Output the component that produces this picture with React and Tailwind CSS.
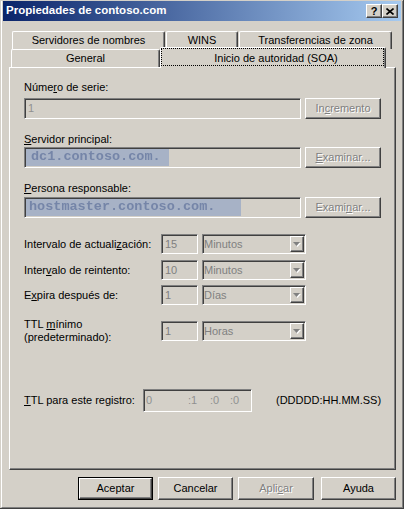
import React from 'react';

const raised =
  'border border-t-white border-l-white border-r-[#404040] border-b-[#404040] shadow-[inset_-1px_-1px_0_#808080]';
const sunken =
  'border border-t-[#808080] border-l-[#808080] border-r-white border-b-white shadow-[inset_1px_1px_0_#404040,inset_-1px_-1px_0_#d4d0c8]';
const grayed = 'text-[#808080] [text-shadow:1px_1px_0_#fff]';

function Button({ children, disabled, className = '' }) {
  return (
    <div className={`${raised} bg-[#d4d0c8] flex items-center justify-center ${disabled ? grayed : 'text-black'} ${className}`}>
      {children}
    </div>
  );
}

function Tab({ children, className = '' }) {
  return (
    <div
      className={`border-t border-l border-r border-t-white border-l-white border-r-[#404040] shadow-[inset_-1px_0_0_#808080] rounded-t-[2px] flex items-center justify-center ${className}`}
    >
      {children}
    </div>
  );
}

function Arrow() {
  return (
    <div className={`${raised} w-[14px] h-[16px] mr-px flex items-center justify-center`}>
      <svg width="8" height="5" viewBox="0 0 8 5">
        <path d="M1 1h7l-3.5 4z" fill="#fff" />
        <path d="M0 0h7l-3.5 4z" fill="#808080" />
      </svg>
    </div>
  );
}

function IntervalRow({ label, value, unit, className = '' }) {
  return (
    <div className={`flex items-center h-[20px] ${className}`}>
      <div className="w-[137px] leading-[13px]">{label}</div>
      <div className={`${sunken} w-[37px] h-full pl-[3px] flex items-center text-[#808080]`}>{value}</div>
      <div className={`${sunken} ml-[4px] w-[104px] h-full pl-px flex items-center text-[#808080]`}>
        <span>{unit}</span>
        <span className="ml-auto">
          <Arrow />
        </span>
      </div>
    </div>
  );
}

export default function App() {
  return (
    <div className="w-[404px] h-[509px] bg-[#d4d0c8] pt-px pl-px border-r border-b border-[#404040] font-['Liberation_Sans',Arial,sans-serif] text-[11px] text-black select-none">
      <div className="h-full border-l border-l-white border-r border-r-[#808080] border-b border-b-[#808080] flex flex-col">
        {/* Title bar */}
        <div className="ml-px w-[398px] h-[20px] bg-[linear-gradient(to_right,#0a246a,#a6caf0)] flex items-center pl-[3px] pr-[3px]">
          <span className="text-white font-bold text-[11.5px]">Propiedades de contoso.com</span>
          <div className="ml-auto flex">
            <Button className="w-[16px] h-[14px] font-bold text-[11px] leading-none">?</Button>
            <Button className="w-[16px] h-[14px]">
              <svg width="8" height="7" viewBox="0 0 8 7">
                <path d="M0.5 0.5l7 6M7.5 0.5l-7 6" stroke="#000" strokeWidth="1.6" />
              </svg>
            </Button>
          </div>
        </div>

        {/* Tabs */}
        <div className="flex gap-px ml-[10px] mt-[10px] h-[18px]">
          <Tab className="w-[153px] h-full">Servidores de nombres</Tab>
          <Tab className="w-[72px] h-full">WINS</Tab>
          <Tab className="w-[153px] h-full">Transferencias de zona</Tab>
        </div>
        <div className="flex items-end ml-[9px] h-[18px]">
          <Tab className="w-[149px] h-[18px] bg-[#d4d0c8]">General</Tab>
          <Tab className="relative z-10 w-[226px] h-[21px] mb-[-1px] bg-[#d4d0c8] items-start">
            <div className="absolute left-0 top-0 right-px bottom-[2px] border border-dotted border-black" />
            <span className="mt-[2px] ml-[6px]">Inicio de autoridad (SOA)</span>
          </Tab>
        </div>

        {/* Panel */}
        <div className="ml-[7px] w-[387px] h-[403px] border border-t-white border-l-white border-r-[#404040] border-b-[#404040] shadow-[inset_-1px_-1px_0_#808080] flex flex-col pl-[14px]">
          <div className="mt-[13px] leading-[13px]">
            Núme<u>r</u>o de serie:
          </div>
          <div className="mt-[4px] flex gap-[4px] h-[21px]">
            <div className={`${sunken} w-[277px] h-full pl-[3px] flex items-center text-[#909090]`}>1</div>
            <Button disabled className="w-[76px] h-full">
              <span>
                In<u>c</u>remento
              </span>
            </Button>
          </div>

          <div className="mt-[14px] leading-[13px]">
            <u>S</u>ervidor principal:
          </div>
          <div className="mt-px flex gap-[4px] h-[21px]">
            <div className={`${sunken} w-[277px] h-full flex py-px`}>
              <span className="ml-px w-[143px] pl-[5px] bg-[#a7b2c6] text-[#7585a8] font-['Liberation_Mono',monospace] text-[13.5px] font-bold blur-[0.4px] flex items-center">
                dc1.contoso.com.
              </span>
            </div>
            <Button disabled className="w-[76px] h-full">
              <span>
                <u>E</u>xaminar...
              </span>
            </Button>
          </div>

          <div className="mt-[14px] leading-[13px]">
            <u>P</u>ersona responsable:
          </div>
          <div className="mt-[2px] flex gap-[4px] h-[21px]">
            <div className={`${sunken} w-[277px] h-full flex py-px`}>
              <span className="ml-px w-[215px] pl-[3px] bg-[#a7b2c6] text-[#7585a8] font-['Liberation_Mono',monospace] text-[13.5px] font-bold blur-[0.4px] flex items-center">
                hostmaster.contoso.com.
              </span>
            </div>
            <Button disabled className="w-[76px] h-full">
              <span>
                Exami<u>n</u>ar...
              </span>
            </Button>
          </div>

          <IntervalRow
            className="mt-[16px]"
            label={<>Intervalo de actuali<u>z</u>ación:</>}
            value="15"
            unit="Minutos"
          />
          <IntervalRow
            className="mt-[6px]"
            label={<>Inter<u>v</u>alo de reintento:</>}
            value="10"
            unit="Minutos"
          />
          <IntervalRow
            className="mt-[5px]"
            label={<>E<u>x</u>pira después de:</>}
            value="1"
            unit="Días"
          />
          <IntervalRow
            className="mt-[16px]"
            label={
              <>
                TTL <u>m</u>ínimo
                <br />
                (predeterminado):
              </>
            }
            value="1"
            unit="Horas"
          />

          <div className="mt-[48px] flex items-center h-[23px]">
            <div className="w-[119px]">
              <u>T</u>TL para este registro:
            </div>
            <div className={`${sunken} w-[109px] h-full pl-[2px] flex items-center text-[#909090]`}>
              <span className="w-[42px]">0</span>
              <span className="w-[22px]">:1</span>
              <span className="w-[20px]">:0</span>
              <span>:0</span>
            </div>
            <div className="ml-[24px]">(DDDDD:HH.MM.SS)</div>
          </div>
        </div>

        {/* Bottom buttons */}
        <div className="mt-[7px] ml-[76px] flex gap-[5px] h-[23px]">
          <div className="w-[75px] h-full border border-black">
            <Button className="w-full h-full">Aceptar</Button>
          </div>
          <Button className="w-[75px] h-full">Cancelar</Button>
          <Button disabled className="w-[76px] h-full">
            <span>
              Apli<u>c</u>ar
            </span>
          </Button>
          <Button className="w-[75px] h-full ml-[2px]">Ayuda</Button>
        </div>
      </div>
    </div>
  );
}
